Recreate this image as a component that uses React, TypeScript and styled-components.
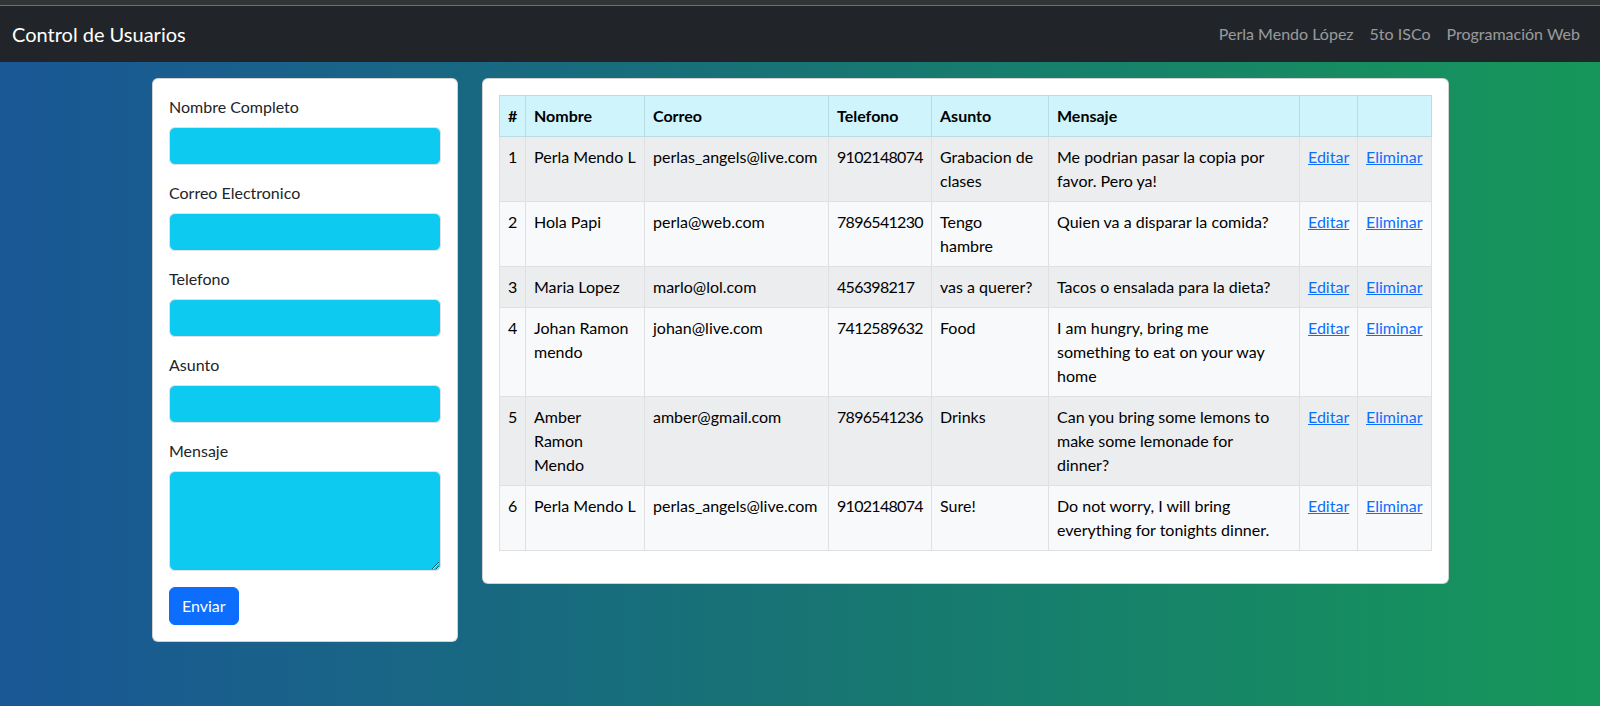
import React from "react";
import styled, { createGlobalStyle } from "styled-components";

const GlobalStyle = createGlobalStyle`
  *, *::before, *::after { box-sizing: border-box; }
  html, body { margin: 0; padding: 0; }
  body {
    font-family: Lato, "Segoe UI", "Noto Sans", "Liberation Sans", sans-serif;
    font-size: 16px;
    line-height: 24px;
    color: #212529;
    min-height: 100vh;
    background: linear-gradient(90deg, #1a5796 0%, #177474 50%, #16975a 100%);
  }
`;

const Chrome = styled.div`
  height: 6px;
  background: #333436;
  border-bottom: 1px solid #6e6f71;
`;

const Navbar = styled.nav`
  display: flex;
  align-items: center;
  justify-content: space-between;
  height: 56px;
  padding: 0 12px;
  background: #212529;
`;

const Brand = styled.a`
  font-size: 20px;
  line-height: 30px;
  color: #ffffff;
  text-decoration: none;
`;

const NavList = styled.div`
  display: flex;
  align-items: center;
`;

const NavLink = styled.a`
  padding: 8px;
  color: rgba(255, 255, 255, 0.55);
  text-decoration: none;
  font-size: 16px;
  line-height: 24px;
`;

const Container = styled.main`
  width: 1296px;
  margin: 16px auto 0;
  display: grid;
  grid-template-columns: 306px 1fr;
  column-gap: 24px;
  align-items: start;
`;

const Card = styled.section`
  background: #ffffff;
  border: 1px solid rgba(0, 0, 0, 0.175);
  border-radius: 6px;
  padding: 16px;
`;

const Form = styled(Card).attrs({ as: "form" })``;

const Field = styled.div`
  margin-bottom: 16px;
`;

const Label = styled.label`
  display: block;
  margin-bottom: 8px;
  line-height: 24px;
  color: #212529;
`;

const Input = styled.input`
  display: block;
  width: 100%;
  height: 38px;
  padding: 6px 12px;
  font: inherit;
  background: #0dcaf0;
  border: 1px solid #dee2e6;
  border-radius: 6px;
  outline: none;
`;

const TextArea = styled.textarea`
  display: block;
  width: 100%;
  height: 100px;
  padding: 6px 12px;
  font: inherit;
  background: #0dcaf0;
  border: 1px solid #dee2e6;
  border-radius: 6px;
  resize: vertical;
  outline: none;
`;

const Button = styled.button`
  display: inline-block;
  padding: 6px 12px;
  font: inherit;
  line-height: 24px;
  color: #ffffff;
  background: #0d6efd;
  border: 1px solid #0d6efd;
  border-radius: 6px;
  cursor: pointer;
`;

const Table = styled.table`
  width: 100%;
  table-layout: fixed;
  border-collapse: collapse;
  margin-bottom: 16px;
  color: #000000;
`;

const Col = styled.col<{ $w: number }>`
  width: ${(p) => p.$w}px;
`;

const HeadCell = styled.th`
  padding: 8px;
  text-align: left;
  font-weight: 700;
  background: #cff4fc;
  border: 1px solid #badce3;
  vertical-align: bottom;
  white-space: nowrap;
`;

const Row = styled.tr<{ $odd: boolean }>`
  background: ${(p) => (p.$odd ? "#ecedee" : "#f8f9fa")};
`;

const Cell = styled.td<{ $spacing?: number }>`
  padding: 8px;
  border: 1px solid #dfe0e1;
  vertical-align: top;
  white-space: nowrap;
  letter-spacing: ${(p) => p.$spacing ?? 0}px;
`;

const Link = styled.a`
  color: #0d6efd;
  text-decoration: underline;
`;

type User = {
  nombre: string[];
  correo: string;
  telefono: string;
  asunto: string[];
  mensaje: string[];
};

const users: User[] = [
  {
    nombre: ["Perla Mendo L"],
    correo: "perlas_angels@live.com",
    telefono: "9102148074",
    asunto: ["Grabacion de", "clases"],
    mensaje: ["Me podrian pasar la copia por", "favor. Pero ya!"],
  },
  {
    nombre: ["Hola Papi"],
    correo: "perla@web.com",
    telefono: "7896541230",
    asunto: ["Tengo", "hambre"],
    mensaje: ["Quien va a disparar la comida?"],
  },
  {
    nombre: ["Maria Lopez"],
    correo: "marlo@lol.com",
    telefono: "456398217",
    asunto: ["vas a querer?"],
    mensaje: ["Tacos o ensalada para la dieta?"],
  },
  {
    nombre: ["Johan Ramon", "mendo"],
    correo: "johan@live.com",
    telefono: "7412589632",
    asunto: ["Food"],
    mensaje: ["I am hungry, bring me", "something to eat on your way", "home"],
  },
  {
    nombre: ["Amber", "Ramon", "Mendo"],
    correo: "amber@gmail.com",
    telefono: "7896541236",
    asunto: ["Drinks"],
    mensaje: ["Can you bring some lemons to", "make some lemonade for", "dinner?"],
  },
  {
    nombre: ["Perla Mendo L"],
    correo: "perlas_angels@live.com",
    telefono: "9102148074",
    asunto: ["Sure!"],
    mensaje: ["Do not worry, I will bring", "everything for tonights dinner."],
  },
];

const Lines = ({ lines }: { lines: string[] }) => (
  <>
    {lines.map((l, i) => (
      <React.Fragment key={i}>
        {i > 0 && <br />}
        {l}
      </React.Fragment>
    ))}
  </>
);

const colWidths = [26, 119, 184, 103, 117, 251, 58, 74];
const headers = ["#", "Nombre", "Correo", "Telefono", "Asunto", "Mensaje", "", ""];
const fields = ["Nombre Completo", "Correo Electronico", "Telefono", "Asunto"];

export default function App() {
  return (
    <>
      <GlobalStyle />
      <Chrome />
      <Navbar>
        <Brand href="#">Control de Usuarios</Brand>
        <NavList>
          <NavLink href="#">Perla Mendo López</NavLink>
          <NavLink href="#">5to ISCo</NavLink>
          <NavLink href="#">Programación Web</NavLink>
        </NavList>
      </Navbar>
      <Container>
        <Form onSubmit={(e: React.FormEvent) => e.preventDefault()}>
          {fields.map((f) => (
            <Field key={f}>
              <Label>{f}</Label>
              <Input type="text" />
            </Field>
          ))}
          <Field>
            <Label>Mensaje</Label>
            <TextArea />
          </Field>
          <Button type="submit">Enviar</Button>
        </Form>
        <Card>
          <Table>
            <colgroup>
              {colWidths.map((w, i) => (
                <Col key={i} $w={w} />
              ))}
            </colgroup>
            <thead>
              <tr>
                {headers.map((h, i) => (
                  <HeadCell key={i}>{h}</HeadCell>
                ))}
              </tr>
            </thead>
            <tbody>
              {users.map((u, i) => (
                <Row key={i} $odd={i % 2 === 0}>
                  <Cell>{i + 1}</Cell>
                  <Cell>
                    <Lines lines={u.nombre} />
                  </Cell>
                  <Cell>{u.correo}</Cell>
                  <Cell $spacing={-0.7}>{u.telefono}</Cell>
                  <Cell>
                    <Lines lines={u.asunto} />
                  </Cell>
                  <Cell>
                    <Lines lines={u.mensaje} />
                  </Cell>
                  <Cell>
                    <Link href="#">Editar</Link>
                  </Cell>
                  <Cell>
                    <Link href="#">Eliminar</Link>
                  </Cell>
                </Row>
              ))}
            </tbody>
          </Table>
        </Card>
      </Container>
    </>
  );
}
